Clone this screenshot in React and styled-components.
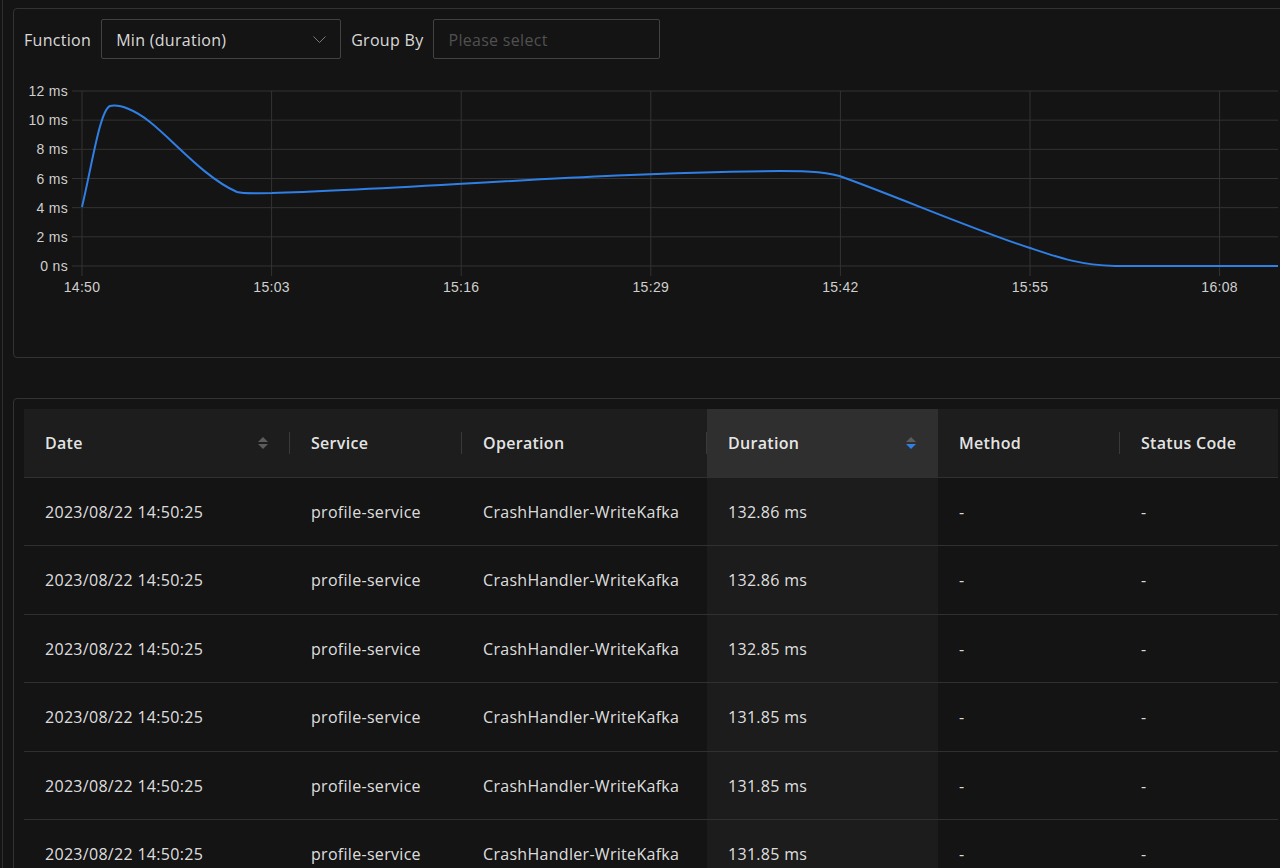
import React from "react";
import styled, { createGlobalStyle } from "styled-components";

const GlobalStyle = createGlobalStyle`
  html, body {
    margin: 0;
    padding: 0;
    background: #141414;
    overflow: hidden;
  }
  body {
    font-family: "Open Sans", "Noto Sans", sans-serif;
    letter-spacing: 0.3px;
    color: rgba(255, 255, 255, 0.85);
  }
`;

const Page = styled.div`
  width: 1278px;
  height: 868px;
  margin-left: 2px;
  border-left: 1px solid #2e2e2e;
  padding: 8px 0 0 10px;
  box-sizing: border-box;
  overflow: hidden;
`;

const Card = styled.div`
  width: 1277px;
  box-sizing: border-box;
  border: 1px solid #333333;
  border-radius: 4px;
  padding: 10px;
  background: #141414;
  margin-top: ${(p) => p.$top || 0}px;
  height: ${(p) => (p.$height ? `${p.$height}px` : "auto")};
`;

const Toolbar = styled.div`
  display: flex;
  align-items: center;
  height: 40px;
  font-size: 16px;
  line-height: 22px;
`;

const Label = styled.span`
  color: rgba(255, 255, 255, 0.85);
  margin-right: 10px;
  padding-top: 2px;
`;

const SelectBox = styled.div`
  width: ${(p) => p.$width}px;
  height: 40px;
  box-sizing: border-box;
  border: 1px solid #424242;
  border-radius: 2px;
  display: flex;
  align-items: center;
  justify-content: space-between;
  padding: 2px 14px 0 14px;
  margin-right: 10px;
  color: ${(p) => (p.$placeholder ? "#505050" : "rgba(255,255,255,0.85)")};
`;

const ChartWrap = styled.div`
  margin-top: 11px;
  height: 276px;
`;

const Table = styled.table`
  width: 1254px;
  border-collapse: collapse;
  table-layout: fixed;
  font-size: 16px;
`;

const HeadCell = styled.th`
  position: relative;
  background: ${(p) => (p.$sorted ? "#2f2f2f" : "#1d1d1d")};
  color: rgba(255, 255, 255, 0.9);
  font-weight: 600;
  text-align: left;
  height: 68px;
  padding: 0 20px 0 21px;
  border-bottom: 1px solid #303030;
  box-sizing: border-box;

  &::before {
    content: "";
    display: ${(p) => (p.$sep ? "block" : "none")};
    position: absolute;
    left: -1px;
    top: 23px;
    width: 1px;
    height: 22px;
    background: #3a3a3a;
  }
`;

const HeadInner = styled.div`
  display: flex;
  align-items: center;
  justify-content: space-between;
  padding-top: 1px;
`;

const Sorter = styled.span`
  display: flex;
  flex-direction: column;
  gap: 2px;
  margin-right: 2px;
`;

const Caret = styled.span`
  width: 0;
  height: 0;
  border-left: 5.5px solid transparent;
  border-right: 5.5px solid transparent;
  ${(p) =>
    p.$up
      ? `border-bottom: 5.5px solid ${p.$active ? "#2f7fe5" : "#5c5c5c"};`
      : `border-top: 5.5px solid ${p.$active ? "#2f7fe5" : "#5c5c5c"};`}
`;

const Cell = styled.td`
  background: ${(p) => (p.$sorted ? "#1c1c1c" : "#141414")};
  color: rgba(255, 255, 255, 0.87);
  height: 68.5px;
  padding: 1px 20px 0 21px;
  border-bottom: 1px solid #303030;
  box-sizing: border-box;
  white-space: nowrap;
`;

const yTicks = ["0 ns", "2 ms", "4 ms", "6 ms", "8 ms", "10 ms", "12 ms"];
const xTicks = ["14:50", "15:03", "15:16", "15:29", "15:42", "15:55", "16:08"];

// page coordinates shifted into svg space (svg sits at x=24, y=70)
const OX = 24;
const OY = 70;

const Chart = () => {
  const step = 175 / 6;
  const xStep = 189.6;
  const line =
    "M82,207 C92,165 100,110 110,106 C120,104 135,110 150,122 C175,142 205,178 237,192 " +
    "C245,194 255,193 272,193 C400,190 600,172 780,171 C810,171 830,172 845,178 " +
    "C900,198 980,232 1030,248 C1060,258 1080,265 1115,266 L1278,266";
  return (
    <svg width="1254" height="276" style={{ display: "block" }}>
      <g transform={`translate(${-OX},${-OY})`}>
        {yTicks.map((t, i) => {
          const y = 266 - i * step;
          return (
            <g key={t}>
              <line x1="72" x2="1278" y1={y} y2={y} stroke="#333" strokeWidth="1" />
              <text
                x="68"
                y={y + 5}
                textAnchor="end"
                fill="#cfcfcf"
                fontSize="14"
                fontFamily="'Liberation Sans', Arial, sans-serif"
              >
                {t}
              </text>
            </g>
          );
        })}
        {xTicks.map((t, i) => {
          const x = 82 + i * xStep;
          return (
            <g key={t}>
              <line x1={x} x2={x} y1="91" y2="276" stroke="#333" strokeWidth="1" />
              <text
                x={x}
                y="292"
                textAnchor="middle"
                fill="#cfcfcf"
                fontSize="14"
                fontFamily="'Liberation Sans', Arial, sans-serif"
              >
                {t}
              </text>
            </g>
          );
        })}
        <path d={line} fill="none" stroke="#2f7fe5" strokeWidth="2" />
      </g>
    </svg>
  );
};

const columns = [
  { key: "date", title: "Date", width: 266, sort: true },
  { key: "service", title: "Service", width: 172, sep: true },
  { key: "op", title: "Operation", width: 245, sep: true },
  { key: "dur", title: "Duration", width: 231, sep: true, sort: true, sorted: true },
  { key: "method", title: "Method", width: 182 },
  { key: "status", title: "Status Code", width: 158, sep: true },
];

const durations = ["132.86", "132.86", "132.85", "131.85", "131.85", "131.85", "131.85", "131.84"];

const rows = durations.map((d) => ({
  date: "2023/08/22 14:50:25",
  service: "profile-service",
  op: "CrashHandler-WriteKafka",
  dur: `${d} ms`,
  method: "-",
  status: "-",
}));

const App = () => (
  <>
    <GlobalStyle />
    <Page>
      <Card $height={350}>
        <Toolbar>
          <Label>Function</Label>
          <SelectBox $width={240}>
            <span>Min (duration)</span>
            <svg width="13" height="8" viewBox="0 0 13 8">
              <polyline points="0.5,0.5 6.5,6.5 12.5,0.5" fill="none" stroke="#7a7a7a" strokeWidth="1" />
            </svg>
          </SelectBox>
          <Label>Group By</Label>
          <SelectBox $width={227} $placeholder>
            <span>Please select</span>
          </SelectBox>
        </Toolbar>
        <ChartWrap>
          <Chart />
        </ChartWrap>
      </Card>
      <Card $top={40}>
        <Table>
          <colgroup>
            {columns.map((c) => (
              <col key={c.key} style={{ width: c.width }} />
            ))}
          </colgroup>
          <thead>
            <tr>
              {columns.map((c) => (
                <HeadCell key={c.key} $sorted={c.sorted} $sep={c.sep}>
                  <HeadInner>
                    <span>{c.title}</span>
                    {c.sort && (
                      <Sorter>
                        <Caret $up />
                        <Caret $active={c.sorted} />
                      </Sorter>
                    )}
                  </HeadInner>
                </HeadCell>
              ))}
            </tr>
          </thead>
          <tbody>
            {rows.map((r, i) => (
              <tr key={i}>
                {columns.map((c) => (
                  <Cell key={c.key} $sorted={c.sorted}>
                    {r[c.key]}
                  </Cell>
                ))}
              </tr>
            ))}
          </tbody>
        </Table>
      </Card>
    </Page>
  </>
);

export default App;
